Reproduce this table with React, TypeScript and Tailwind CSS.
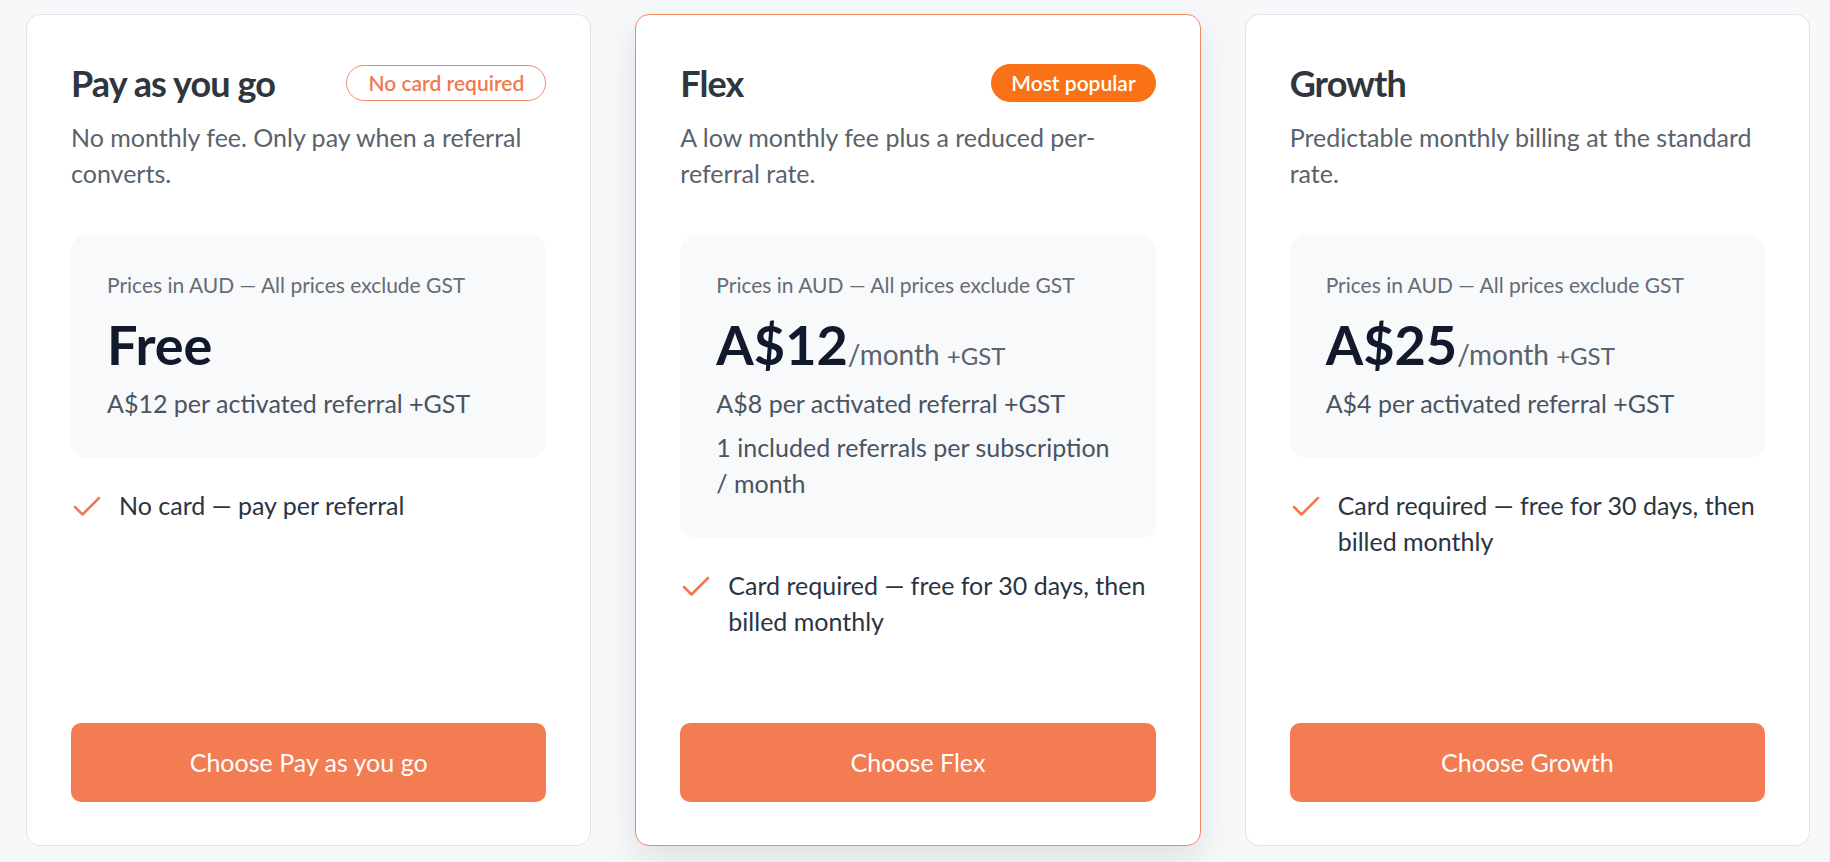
import { Check } from 'lucide-react'

type Plan = {
  name: string
  description: string
  badge?: { label: string; filled: boolean }
  price: string
  period?: boolean
  lines: string[]
  features: string[]
  featured?: boolean
}

const plans: Plan[] = [
  {
    name: 'Pay as you go',
    description: 'No monthly fee. Only pay when a referral converts.',
    badge: { label: 'No card required', filled: false },
    price: 'Free',
    lines: ['A$12 per activated referral +GST'],
    features: ['No card — pay per referral'],
  },
  {
    name: 'Flex',
    description: 'A low monthly fee plus a reduced per-referral rate.',
    badge: { label: 'Most popular', filled: true },
    price: 'A$12',
    period: true,
    lines: ['A$8 per activated referral +GST', '1 included referrals per subscription / month'],
    features: ['Card required — free for 30 days, then billed monthly'],
    featured: true,
  },
  {
    name: 'Growth',
    description: 'Predictable monthly billing at the standard rate.',
    price: 'A$25',
    period: true,
    lines: ['A$4 per activated referral +GST'],
    features: ['Card required — free for 30 days, then billed monthly'],
  },
]

function PlanCard({ plan }: { plan: Plan }) {
  return (
    <article
      className={`flex h-[832px] flex-col rounded-[14px] border bg-white px-11 pt-12 pb-[43px] ${
        plan.featured
          ? 'border-[#f08a62] shadow-[0_14px_34px_rgba(15,23,42,0.10)]'
          : 'border-[#dfe3e8]'
      }`}
    >
      <div className="flex h-10 items-center justify-between">
        <h2 className="text-4xl font-bold tracking-tight text-[#30363d]">{plan.name}</h2>
        {plan.badge ? (
          plan.badge.filled ? (
            <span className="rounded-full border border-[#f97316] bg-[#f97316] px-[19px] py-[5px] text-[21px] font-semibold leading-[26px] text-white">
              {plan.badge.label}
            </span>
          ) : (
            <span className="rounded-full border border-[#ef8a65] px-[21px] py-[4px] text-[21px] font-semibold leading-[26px] text-[#f07a4e]">
              {plan.badge.label}
            </span>
          )
        ) : null}
      </div>
      <p className="mt-4 text-[25px] leading-9 text-[#5a626c]">{plan.description}</p>

      <div className="mt-11 rounded-2xl bg-[#f7f9fb] px-9 pt-9 pb-[37px]">
        <p className="text-[21px] leading-7 text-[#656c75]">Prices in AUD — All prices exclude GST</p>
        <p className="mt-[19px] flex items-baseline leading-none">
          <span className="text-[54px] font-bold leading-[54px] text-[#111a2c]">{plan.price}</span>
          {plan.period ? (
            <span className="text-[28px] text-[#5a626c]">
              /month <span className="text-[24px]">+GST</span>
            </span>
          ) : null}
        </p>
        <div className="mt-[13px] space-y-2">
          {plan.lines.map((line) => (
            <p key={line} className="text-[25px] leading-9 text-[#4a5361]">
              {line}
            </p>
          ))}
        </div>
      </div>

      <ul className="mt-[29px] space-y-2">
        {plan.features.map((item) => (
          <li key={item} className="flex items-start gap-3.5 text-[25px] leading-9 text-[#2b3441]">
            <Check className="mt-0.5 -ml-[2px] h-9 w-9 shrink-0 text-[#f2774c]" strokeWidth={1.7} />
            <span>{item}</span>
          </li>
        ))}
      </ul>

      <button className="mt-auto h-[79px] w-full rounded-[10px] bg-[#f37c52] text-[25px] text-white">
        Choose {plan.name}
      </button>
    </article>
  )
}

export default function App() {
  return (
    <div className="min-h-screen bg-[#f7f8fa] pt-[14px] pr-[20px] pl-[26px] font-[Lato,sans-serif]">
      <div className="grid grid-cols-3 gap-[44px]">
        {plans.map((plan) => (
          <PlanCard key={plan.name} plan={plan} />
        ))}
      </div>
    </div>
  )
}
